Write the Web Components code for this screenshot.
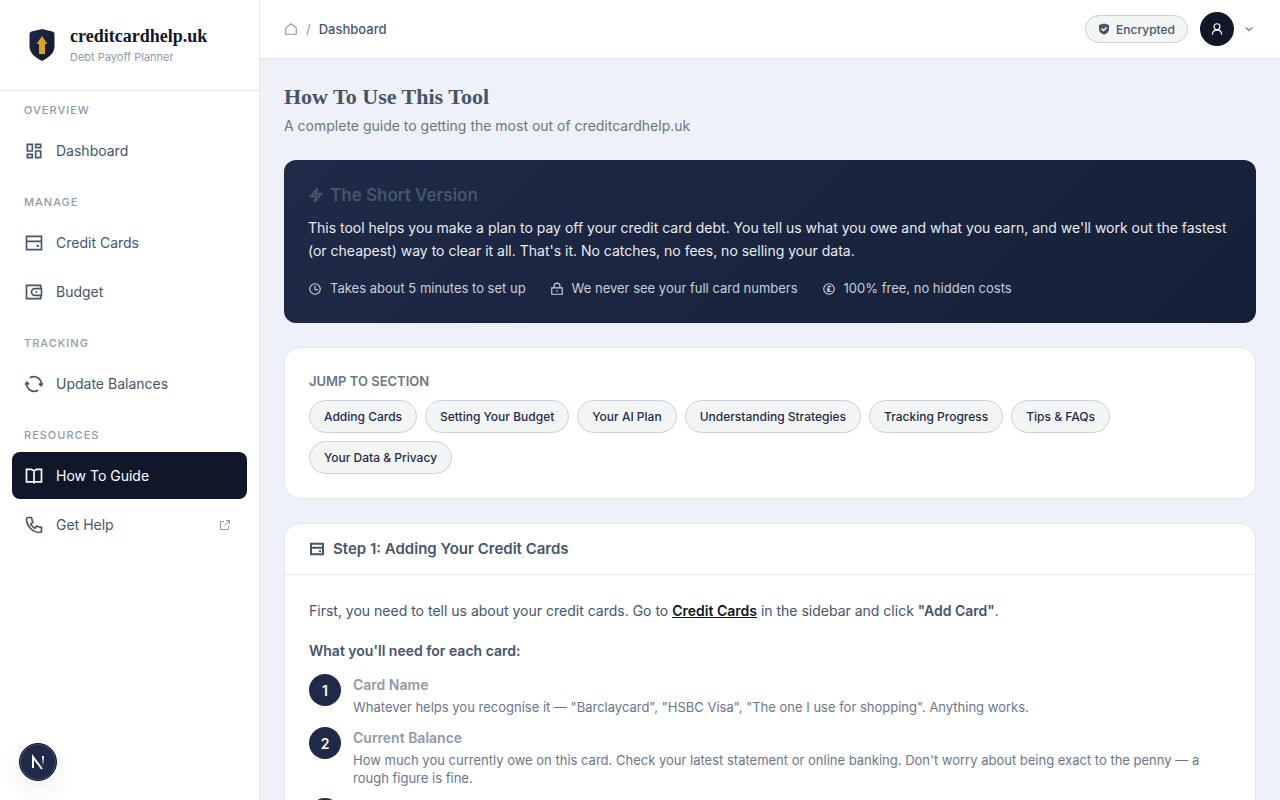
<!DOCTYPE html>
<html lang="en">

<head>
    <meta charset="UTF-8">
    <meta name="viewport" content="width=device-width, initial-scale=1.0">
    <title>creditcardhelp.uk - How To Use This Tool</title>
    <style>
        :root {
            --ink: #0f1729;
            --navy: #1e2a47;
            --text: #475569;
            --soft: #6b7688;
            --muted: #9199a6;
            --line: #e5e7eb;
            --pill: #f4f6f6;
            --pill-line: #cbd0d9;
            --page: #eef1f9;
            --serif: "Liberation Serif", serif;
        }

        body {
            margin: 0;
            background: var(--page);
            color: var(--text);
            font-family: Inter, "Liberation Sans", sans-serif;
            font-size: 14px;
        }
    </style>
</head>

<body>
    <app-shell>
        <side-bar slot="sidebar">
            <nav-group label="Overview">
                <nav-item icon="grid">Dashboard</nav-item>
            </nav-group>
            <nav-group label="Manage">
                <nav-item icon="card">Credit Cards</nav-item>
                <nav-item icon="wallet">Budget</nav-item>
            </nav-group>
            <nav-group label="Tracking">
                <nav-item icon="refresh">Update Balances</nav-item>
            </nav-group>
            <nav-group label="Resources">
                <nav-item icon="book" active>How To Guide</nav-item>
                <nav-item icon="phone" external>Get Help</nav-item>
            </nav-group>
        </side-bar>

        <top-bar slot="header">Dashboard</top-bar>

        <page-heading>
            How To Use This Tool
            <span slot="subtitle">A complete guide to getting the most out of creditcardhelp.uk</span>
        </page-heading>

        <summary-banner>
            <span slot="title">The Short Version</span>
            This tool helps you make a plan to pay off your credit card debt. You tell us what you owe and what you earn, and we'll work out the fastest (or cheapest) way to clear it all. That's it. No catches, no fees, no selling your data.
            <feature-note slot="notes" icon="clock">Takes about 5 minutes to set up</feature-note>
            <feature-note slot="notes" icon="lock">We never see your full card numbers</feature-note>
            <feature-note slot="notes" icon="pound">100% free, no hidden costs</feature-note>
        </summary-banner>

        <jump-links>
            <jump-link href="#cards">Adding Cards</jump-link>
            <jump-link href="#budget">Setting Your Budget</jump-link>
            <jump-link href="#plan">Your AI Plan</jump-link>
            <jump-link href="#strategies">Understanding Strategies</jump-link>
            <jump-link href="#progress">Tracking Progress</jump-link>
            <jump-link href="#tips">Tips &amp; FAQs</jump-link>
            <jump-link href="#privacy">Your Data &amp; Privacy</jump-link>
        </jump-links>

        <guide-card id="cards" icon="card">
            <span slot="title">Step 1: Adding Your Credit Cards</span>
            <guide-intro></guide-intro>
            <guide-step number="1">
                <span slot="title">Card Name</span>
                Whatever helps you recognise it — "Barclaycard", "HSBC Visa", "The one I use for shopping". Anything works.
            </guide-step>
            <guide-step number="2">
                <span slot="title">Current Balance</span>
                How much you currently owe on this card. Check your latest statement or online banking. Don't worry about being exact to the penny — a rough figure is fine.
            </guide-step>
            <guide-step></guide-step>
        </guide-card>

        <dev-badge slot="overlay"></dev-badge>
    </app-shell>

    <script>
        // Attach an open shadow root and fill it from a template
        function render(host, html) {
            const root = host.attachShadow({ mode: 'open' });
            const template = document.createElement('template');
            template.innerHTML = html;
            root.appendChild(template.content.cloneNode(true));
        }

        // 24px grid, stroked with the current colour
        const ICONS = {
            grid: '<path d="M4 4h6v8H4zM14 4h6v4h-6zM14 12h6v8h-6zM4 16h6v4H4z"/>',
            card: '<path d="M3 4h18v16H3zM3 10h18M15 15.500h3"/>',
            wallet: '<path d="M20 8V4H3v16h17v-4M13 8h8v8h-8a4 4 0 0 1 0-8zM13.500 12h2.500"/>',
            refresh: '<path d="M7 4.500A9 9 0 0 1 20.500 14M17 19.500A9 9 0 0 1 3.500 10M18 11.500l2.500 2.500 2-3M1.500 13l2-3L6 12.500"/>',
            book: '<path d="M12 5v16M3 4h6l3 2 3-2h6v15H3z"/>',
            phone: '<path d="M4 3h5l1.500 6L8 11a14 14 0 0 0 5 5l2-2.500 6 1.500v5q-1 1-2 1C10 20.500 3.500 14 3 5q0-1 1-2z"/>',
            external: '<path d="M10 5H3v16h16v-7M14 3h7v7M21 3l-10 10"/>',
            home: '<path d="M3 21V10l9-7 9 7v11z"/>',
            user: '<circle cx="12" cy="8" r="5"/><path d="M4 22c0-5 3-8 8-8s8 3 8 8"/>',
            chevron: '<path d="M4 8l8 8 8-8"/>',
            bolt: '<path d="M14 2L4 14h8l-2 8 10-12h-8z"/>',
            clock: '<circle cx="12" cy="12" r="9"/><path d="M12 6v7h5"/>',
            lock: '<path d="M3 10h18v11H3zM7 10V7a5 5 0 0 1 10 0v3M12 14v3"/>',
            pound: '<circle cx="12" cy="12" r="9"/><path d="M15.500 9c-1-3-6-2.500-5 1 .8 3 .5 5-1.500 6h7M8 12.500h6"/>',
            shield: '<path fill="currentColor" stroke="none" d="M12 1l10 3v8c0 6-4 9-10 11C6 21 2 18 2 12V4z"/><path stroke="#fff" d="M7 11l4 4 6-6"/>'
        };

        class AppIcon extends HTMLElement {
            constructor() {
                super();
                render(this, `
                    <style>
                        :host { display: inline-flex; flex: none; width: 16px; height: 16px; }
                        svg { width: 100%; height: 100%; fill: none; stroke: currentColor; stroke-width: var(--stroke, 2); }
                    </style>
                    <svg viewBox="0 0 24 24" aria-hidden="true">${ICONS[this.getAttribute('name')]}</svg>
                `);
            }
        }

        class AppShell extends HTMLElement {
            constructor() {
                super();
                render(this, `
                    <style>
                        :host { display: grid; grid-template-columns: 260px minmax(0, 1fr); height: 100vh; }
                        .column { display: flex; flex-direction: column; min-height: 0; }
                        main { flex: 1; min-height: 0; overflow-y: auto; scrollbar-width: none; }
                        .content { display: flex; flex-direction: column; gap: 24px; padding: 24px; }
                    </style>
                    <slot name="sidebar"></slot>
                    <div class="column">
                        <slot name="header"></slot>
                        <main><div class="content"><slot></slot></div></main>
                    </div>
                    <slot name="overlay"></slot>
                `);
            }
        }

        class SideBar extends HTMLElement {
            constructor() {
                super();
                render(this, `
                    <style>
                        :host { display: flex; flex-direction: column; background: #fff; border-right: 1px solid var(--line); }
                        .brand { display: flex; align-items: center; gap: 12px; padding: 0 24px; height: 90px; border-bottom: 1px solid var(--line); text-decoration: none; }
                        svg { width: 34px; height: 36px; }
                        .name { display: block; font: bold 18px/24px var(--serif); color: var(--ink); }
                        .tag { display: block; font-size: 11px; line-height: 18px; color: var(--muted); }
                        nav { display: flex; flex-direction: column; gap: 20px; padding: 11px 12px; }
                    </style>
                    <a class="brand" href="#">
                        <svg viewBox="0 0 34 36" aria-hidden="true">
                            <defs>
                                <linearGradient id="shade" x1="0" y1="0" x2="1" y2="1">
                                    <stop offset="0" stop-color="#1e2a47"/>
                                    <stop offset="1" stop-color="#0f1729"/>
                                </linearGradient>
                            </defs>
                            <path fill="url(#shade)" d="M18 2l10.500 2.500Q30.500 5 30.500 7v12c0 7-5 11-12.500 15C10.500 30 5.500 26 5.500 19V7q0-2 2-2.500z"/>
                            <path fill="#d9a322" d="M18 9l5.500 8H21v10h-6V17h-2.500z"/>
                        </svg>
                        <span>
                            <span class="name">creditcardhelp.uk</span>
                            <span class="tag">Debt Payoff Planner</span>
                        </span>
                    </a>
                    <nav aria-label="Main"><slot></slot></nav>
                `);
            }
        }

        class NavGroup extends HTMLElement {
            constructor() {
                super();
                render(this, `
                    <style>
                        :host { display: block; }
                        h2 { margin: 0 12px 8px; font-size: 11px; line-height: 17px; font-weight: 500; letter-spacing: 1px; text-transform: uppercase; color: var(--muted); }
                        .items { display: flex; flex-direction: column; gap: 2px; }
                    </style>
                    <h2>${this.getAttribute('label')}</h2>
                    <div class="items"><slot></slot></div>
                `);
            }
        }

        class NavItem extends HTMLElement {
            constructor() {
                super();
                render(this, `
                    <style>
                        :host { display: block; }
                        a { display: flex; align-items: center; gap: 12px; height: 47px; padding: 0 16px 0 12px; border-radius: 8px; font-size: 14px; color: var(--text); text-decoration: none; }
                        app-icon { width: 20px; height: 20px; }
                        .out { width: 12px; height: 12px; margin-left: auto; color: var(--muted); }
                        :host([active]) a { background: var(--ink); color: #fff; }
                    </style>
                    <a href="#" ${this.hasAttribute('active') ? 'aria-current="page"' : ''}>
                        <app-icon name="${this.getAttribute('icon')}"></app-icon>
                        <slot></slot>
                        ${this.hasAttribute('external') ? '<app-icon class="out" name="external"></app-icon>' : ''}
                    </a>
                `);
            }
        }

        class TopBar extends HTMLElement {
            constructor() {
                super();
                render(this, `
                    <style>
                        :host { display: flex; align-items: center; justify-content: space-between; height: 58px; padding: 0 24px; background: #fff; border-bottom: 1px solid var(--line); }
                        .crumbs { display: flex; align-items: center; gap: 8px; font-size: 13px; font-weight: 500; }
                        .crumbs a, .slash { display: flex; color: var(--muted); }
                        .slash { font-weight: 400; }
                        .home { width: 14px; height: 14px; }
                        .actions { display: flex; align-items: center; gap: 12px; }
                        .secure { display: flex; align-items: center; gap: 6px; height: 26px; padding: 0 12px; border: 1px solid var(--pill-line); border-radius: 14px; background: var(--pill); font-size: 12px; font-weight: 500; }
                        .secure app-icon { width: 12px; height: 12px; --stroke: 3; }
                        button { display: flex; align-items: center; gap: 8px; padding: 0; border: 0; background: none; color: var(--soft); }
                        .avatar { display: grid; place-items: center; width: 34px; height: 34px; border-radius: 50%; background: var(--ink); color: #fff; }
                        .avatar app-icon { width: 14px; height: 14px; }
                        .caret { width: 10px; height: 10px; margin: 0 2px; --stroke: 3; }
                    </style>
                    <nav class="crumbs" aria-label="Breadcrumb">
                        <a href="#" aria-label="Home"><app-icon class="home" name="home"></app-icon></a>
                        <span class="slash">/</span>
                        <slot></slot>
                    </nav>
                    <div class="actions">
                        <span class="secure"><app-icon name="shield"></app-icon>Encrypted</span>
                        <button type="button" aria-label="Account menu">
                            <span class="avatar"><app-icon name="user"></app-icon></span>
                            <app-icon class="caret" name="chevron"></app-icon>
                        </button>
                    </div>
                `);
            }
        }

        class PageHeading extends HTMLElement {
            constructor() {
                super();
                render(this, `
                    <style>
                        :host { display: block; }
                        h1 { margin: 0 0 4px; font: bold 22px/28px var(--serif); }
                        p { margin: 0; font-size: 14px; line-height: 21px; color: var(--soft); }
                    </style>
                    <h1><slot></slot></h1>
                    <p><slot name="subtitle"></slot></p>
                `);
            }
        }

        class SummaryBanner extends HTMLElement {
            constructor() {
                super();
                render(this, `
                    <style>
                        :host { display: block; padding: 24px; border-radius: 12px; background: linear-gradient(135deg, var(--navy), #152038); color: #e9ebef; }
                        h2 { display: flex; align-items: center; gap: 6px; margin: 0 0 10px; font-size: 17px; line-height: 22px; font-weight: 600; color: var(--text); --stroke: 3; }
                        p { margin: 0 0 16px; font-size: 14px; line-height: 23px; }
                        .notes { display: flex; flex-wrap: wrap; gap: 8px 24px; }
                    </style>
                    <h2><app-icon name="bolt"></app-icon><slot name="title"></slot></h2>
                    <p><slot></slot></p>
                    <div class="notes"><slot name="notes"></slot></div>
                `);
            }
        }

        class FeatureNote extends HTMLElement {
            constructor() {
                super();
                render(this, `
                    <style>
                        :host { display: flex; align-items: center; gap: 8px; font-size: 13px; line-height: 21px; color: #c9ced7; }
                        app-icon { width: 14px; height: 14px; }
                    </style>
                    <app-icon name="${this.getAttribute('icon')}"></app-icon>
                    <slot></slot>
                `);
            }
        }

        class JumpLinks extends HTMLElement {
            constructor() {
                super();
                render(this, `
                    <style>
                        :host { display: block; padding: 24px; border: 1px solid var(--line); border-radius: 16px; background: #fff; }
                        h2 { margin: 0 0 10px; font-size: 13px; line-height: 18px; font-weight: 600; text-transform: uppercase; color: var(--soft); }
                        .links { display: flex; flex-wrap: wrap; gap: 8px; }
                    </style>
                    <h2>Jump to section</h2>
                    <div class="links"><slot></slot></div>
                `);
            }
        }

        class JumpLink extends HTMLElement {
            constructor() {
                super();
                render(this, `
                    <style>
                        :host { display: block; }
                        a { display: block; padding: 0 14px; border: 1px solid var(--pill-line); border-radius: 17px; background: var(--pill); font-size: 12px; line-height: 31px; font-weight: 500; color: var(--navy); text-decoration: none; }
                    </style>
                    <a href="${this.getAttribute('href')}"><slot></slot></a>
                `);
            }
        }

        class GuideCard extends HTMLElement {
            constructor() {
                super();
                render(this, `
                    <style>
                        :host { display: block; border: 1px solid var(--line); border-radius: 16px; background: #fff; }
                        h2 { display: flex; align-items: center; gap: 8px; margin: 0; padding: 0 24px; border-bottom: 1px solid var(--line); font-size: 15px; line-height: 50px; font-weight: 600; --stroke: 3; }
                        .body { display: flex; flex-direction: column; gap: 11px; padding: 24px; }
                    </style>
                    <h2><app-icon name="${this.getAttribute('icon')}"></app-icon><slot name="title"></slot></h2>
                    <div class="body"><slot></slot></div>
                `);
            }
        }

        class GuideIntro extends HTMLElement {
            constructor() {
                super();
                render(this, `
                    <style>
                        :host { display: block; }
                        p { margin: 0 0 16px; font-size: 14px; line-height: 24px; }
                        a { font-weight: 600; color: var(--ink); }
                        strong, h3 { font-weight: 600; }
                        h3 { margin: 0; font-size: 14px; line-height: 24px; }
                    </style>
                    <p>First, you need to tell us about your credit cards. Go to <a href="#">Credit Cards</a> in the sidebar and click <strong>"Add Card"</strong>.</p>
                    <h3>What you'll need for each card:</h3>
                `);
            }
        }

        class GuideStep extends HTMLElement {
            constructor() {
                super();
                render(this, `
                    <style>
                        :host { display: flex; gap: 12px; }
                        .number { display: grid; place-items: center; flex: none; width: 32px; height: 32px; border-radius: 50%; background: var(--navy); font-size: 14px; font-weight: 600; color: #fff; }
                        h4 { margin: 0 0 2px; font-size: 14px; line-height: 22px; font-weight: 600; color: var(--muted); }
                        p { margin: 0; font-size: 13px; line-height: 18px; color: var(--soft); }
                    </style>
                    <span class="number">${this.getAttribute('number') || ''}</span>
                    <div>
                        <h4><slot name="title"></slot></h4>
                        <p><slot></slot></p>
                    </div>
                `);
            }
        }

        // Round tools button that floats over the page corner
        class DevBadge extends HTMLElement {
            constructor() {
                super();
                render(this, `
                    <style>
                        :host { position: fixed; left: 19px; bottom: 19px; }
                        button { display: grid; place-items: center; width: 38px; height: 38px; padding: 0; border: 1px solid var(--ink); border-radius: 50%; background: var(--navy); box-shadow: inset 0 0 0 1px #465069, 0 8px 24px rgba(0, 0, 0, .08); }
                        svg { width: 16px; height: 16px; fill: none; stroke-width: 2; }
                    </style>
                    <button type="button" aria-label="Open developer tools">
                        <svg viewBox="0 0 16 16" aria-hidden="true">
                            <defs>
                                <linearGradient id="fade" gradientUnits="userSpaceOnUse" x1="0" y1="2" x2="0" y2="12">
                                    <stop stop-color="#fff"/>
                                    <stop offset="1" stop-color="#fff" stop-opacity="0"/>
                                </linearGradient>
                            </defs>
                            <path stroke="#fff" d="M3 14V3l9 12"/>
                            <path stroke="url(#fade)" d="M13 2v10"/>
                        </svg>
                    </button>
                `);
            }
        }

        customElements.define('app-icon', AppIcon);
        customElements.define('app-shell', AppShell);
        customElements.define('side-bar', SideBar);
        customElements.define('nav-group', NavGroup);
        customElements.define('nav-item', NavItem);
        customElements.define('top-bar', TopBar);
        customElements.define('page-heading', PageHeading);
        customElements.define('summary-banner', SummaryBanner);
        customElements.define('feature-note', FeatureNote);
        customElements.define('jump-links', JumpLinks);
        customElements.define('jump-link', JumpLink);
        customElements.define('guide-card', GuideCard);
        customElements.define('guide-intro', GuideIntro);
        customElements.define('guide-step', GuideStep);
        customElements.define('dev-badge', DevBadge);
    </script>
</body>

</html>
